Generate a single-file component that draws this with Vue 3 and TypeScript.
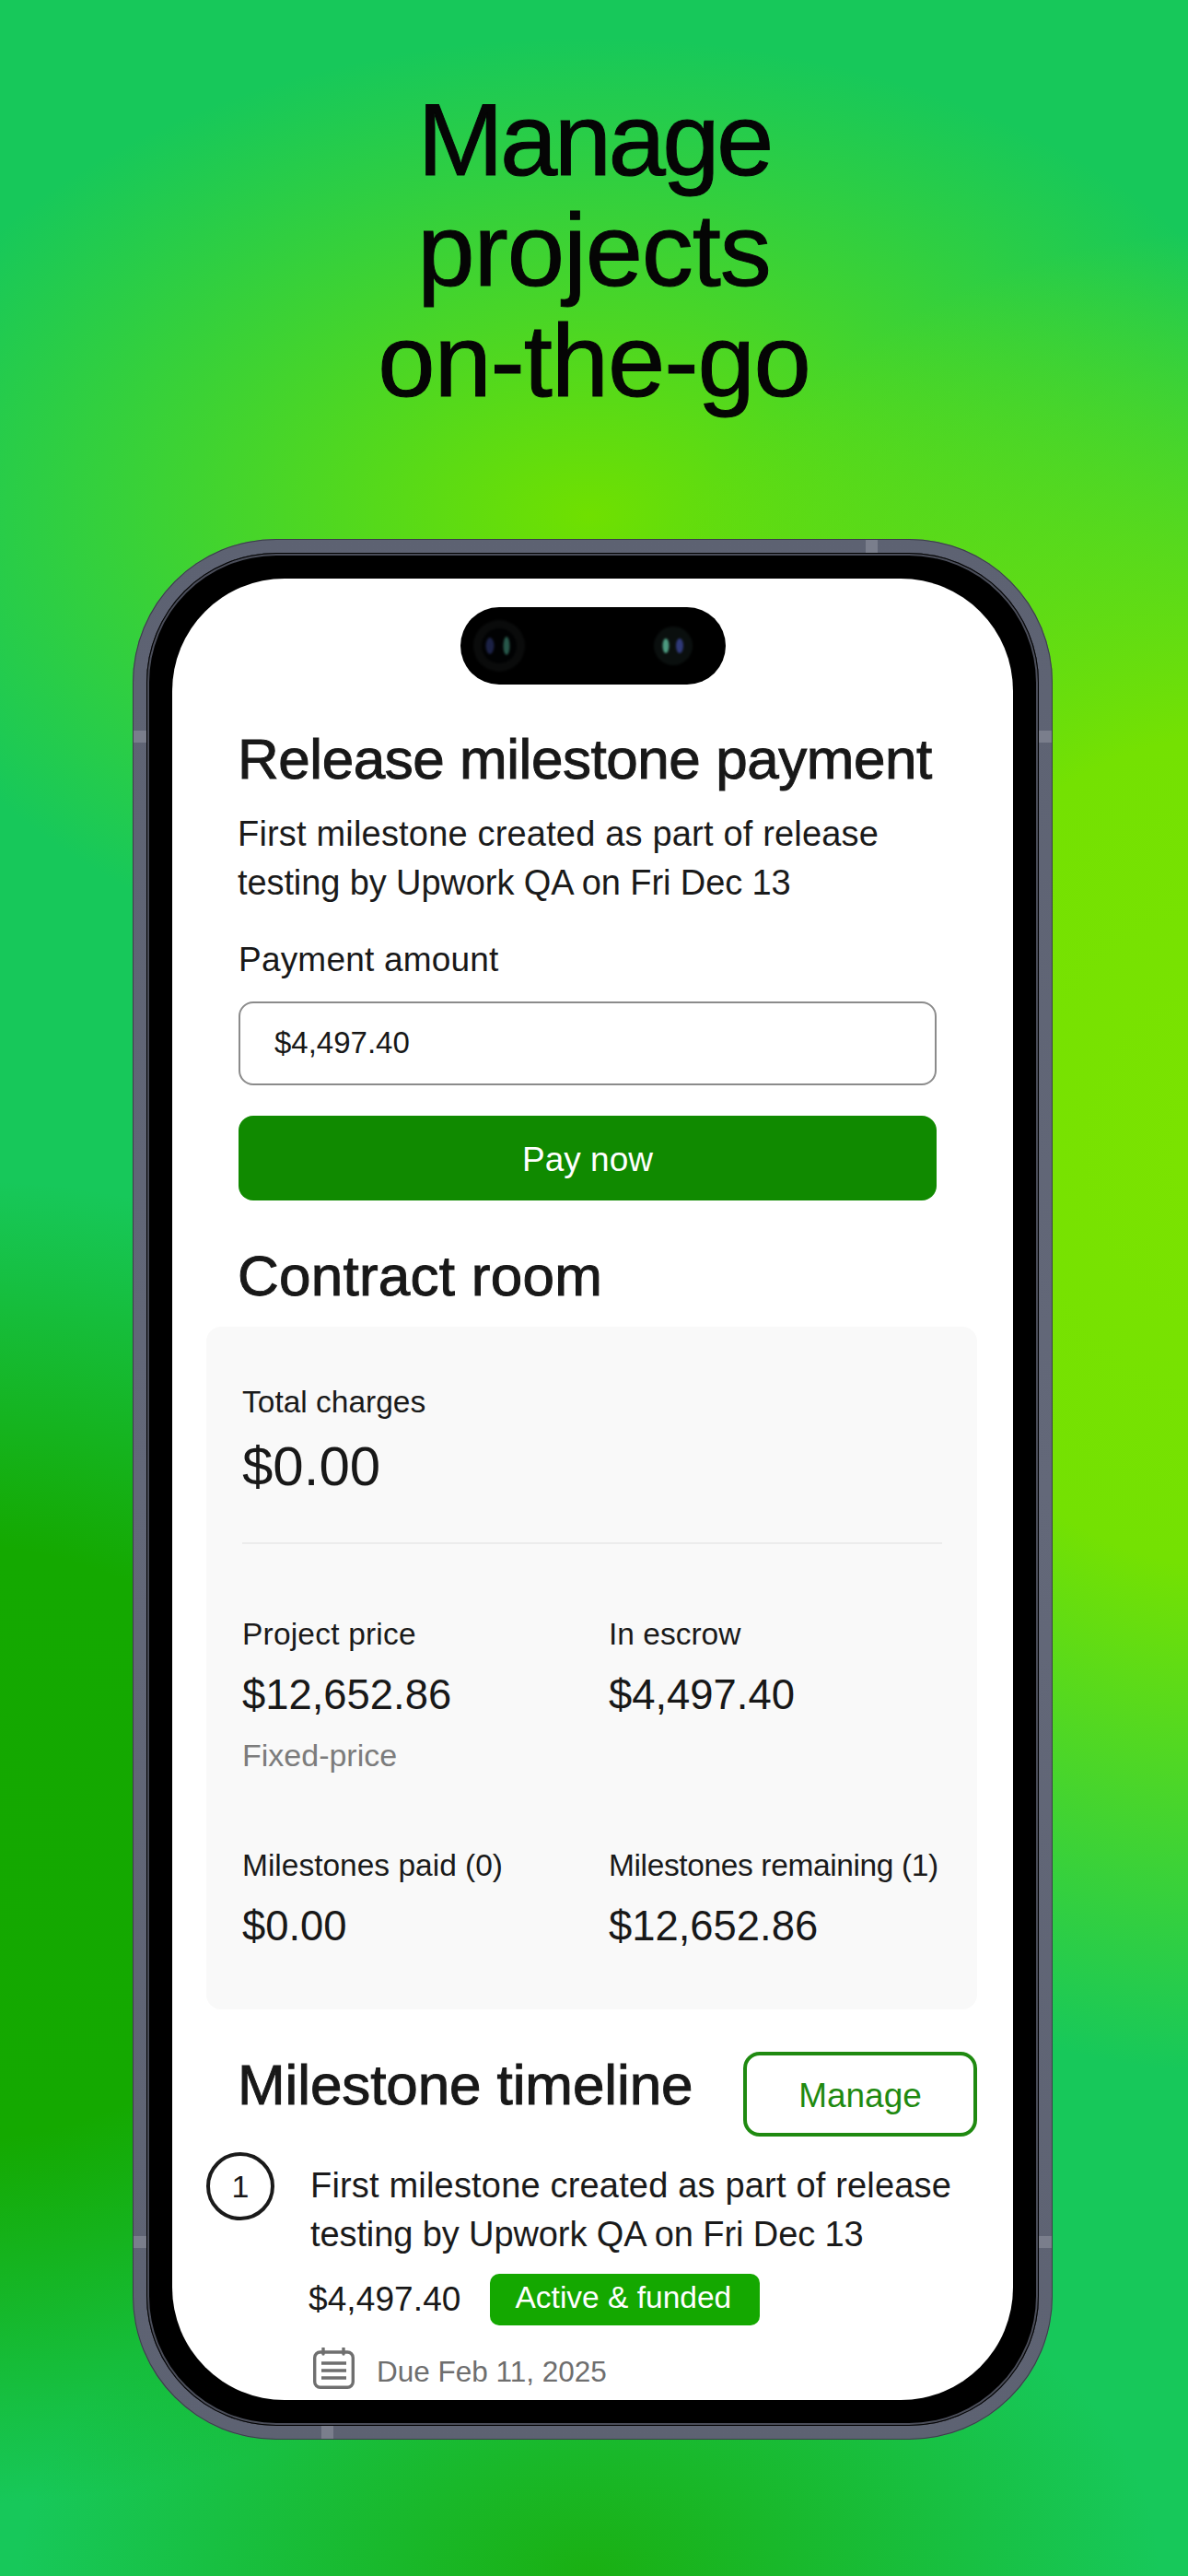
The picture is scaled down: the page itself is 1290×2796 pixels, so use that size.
<template>
  <div class="page">
    <h1 class="headline"><span class="tight">Manage</span><br />projects<br />on-the-go</h1>

    <div class="phone">
      <span v-for="b in bands" :key="b" class="band" :class="b" />
      <div class="bezel">
        <div class="screen">
          <div class="island">
            <svg class="lenses" width="288" height="84" viewBox="0 0 288 84">
              <circle cx="42" cy="42" r="28" fill="#0a0b0b" />
              <circle cx="42" cy="42" r="19" fill="#010203" />
              <ellipse cx="32" cy="42" rx="4.5" ry="9" fill="#1b2145" />
              <ellipse cx="50" cy="42" rx="3.5" ry="10" fill="#27574a" />
              <circle cx="231" cy="42" r="21" fill="#0a0f0e" />
              <ellipse cx="223" cy="42" rx="3.5" ry="8" fill="#4c9a80" />
              <ellipse cx="238" cy="42" rx="4" ry="8" fill="#2f3978" />
            </svg>
          </div>

          <div class="content">
            <section class="release">
              <h2 class="title release-title">Release milestone payment</h2>
              <p class="desc"><span class="line-a">{{ descLine1 }}</span><br /><span class="line-b">{{ descLine2 }}</span></p>
              <div class="form">
                <label class="field-label">Payment amount</label>
                <div class="input">$4,497.40</div>
                <button class="pay">Pay now</button>
              </div>
              <h2 class="title room-title">Contract room</h2>
            </section>

            <section class="card">
              <div class="label">Total charges</div>
              <div class="total">$0.00</div>
              <div class="divider" />
              <div class="stats">
                <div v-for="s in stats" :key="s.label" class="stat">
                  <div class="label">{{ s.label }}</div>
                  <div class="value">{{ s.value }}</div>
                  <div v-if="s.note" class="note">{{ s.note }}</div>
                </div>
              </div>
            </section>

            <section class="timeline">
              <div class="timeline-head">
                <h2 class="title">Milestone timeline</h2>
                <button class="manage">Manage</button>
              </div>
              <div class="milestone">
                <div class="num">1</div>
                <div class="detail">
                  <p class="desc"><span class="line-a">{{ descLine1 }}</span><br /><span class="line-b">{{ descLine2 }}</span></p>
                  <div class="amount-row">
                    <span class="amount">$4,497.40</span>
                    <span class="badge">Active &amp; funded</span>
                  </div>
                  <div class="due">
                    <svg class="cal" viewBox="0 0 45 45" fill="none" stroke="#6f6f6f" stroke-width="3.4" stroke-linecap="round">
                      <rect x="1.7" y="5" width="41.6" height="38.3" rx="6" />
                      <path d="M11 1v6M33 1v6" />
                      <path d="M9 17h27M9 25h27M9 33h27" stroke-width="3.6" stroke-linecap="butt" />
                    </svg>
                    <span class="due-text">Due Feb 11, 2025</span>
                  </div>
                </div>
              </div>
            </section>
          </div>
        </div>
      </div>
    </div>
  </div>
</template>

<script setup lang="ts">
interface Stat {
  label: string
  value: string
  note?: string
}

const descLine1 = 'First milestone created as part of release'
const descLine2 = 'testing by Upwork QA on Fri Dec 13'

const stats: Stat[] = [
  { label: 'Project price', value: '$12,652.86', note: 'Fixed-price' },
  { label: 'In escrow', value: '$4,497.40' },
  { label: 'Milestones paid (0)', value: '$0.00' },
  { label: 'Milestones remaining (1)', value: '$12,652.86' },
]

const bands = ['top', 'bottom', 'left-a', 'left-b', 'right-a', 'right-b']
</script>

<style>
html,
body {
  margin: 0;
  padding: 0;
}
</style>

<style scoped>
.page {
  width: 1290px;
  height: 2796px;
  overflow: hidden;
  box-sizing: border-box;
  padding-top: 92px;
  font-family: "Liberation Sans", Arial, sans-serif;
  color: #181818;
  background:
    radial-gradient(ellipse 820px 1000px at 1330px 1250px, #7be300 0%, #74e102 45%, rgba(116, 225, 2, 0) 100%),
    radial-gradient(ellipse 800px 520px at 640px 560px, #6fe000 0%, rgba(111, 224, 0, 0) 100%),
    radial-gradient(ellipse 900px 720px at -60px 2000px, #14a800 0%, #14a900 45%, rgba(20, 168, 0, 0) 100%),
    radial-gradient(ellipse 620px 400px at 640px 2796px, #1ab012 0%, rgba(26, 176, 18, 0) 100%),
    #17c85a;
}

.headline {
  margin: 0;
  height: 493px;
  font-size: 112px;
  line-height: 120px;
  font-weight: 400;
  letter-spacing: -1.1px;
  text-align: center;
  color: #050505;
  -webkit-text-stroke: 1px #050505;
}

.tight {
  letter-spacing: -3.6px;
}

.phone {
  position: relative;
  width: 999px;
  height: 2063px;
  margin-left: 144px;
  box-sizing: border-box;
  padding: 15px;
  border-radius: 156px;
  background: linear-gradient(180deg, #5d6272, #636879 50%, #5d6272);
  box-shadow: inset 0 0 0 1px #3b3e49;
}

.band {
  position: absolute;
  background: #7a7e8c;
}

.band.top {
  top: 1px;
  left: 796px;
  width: 13px;
  height: 14px;
}

.band.bottom {
  bottom: 1px;
  left: 205px;
  width: 13px;
  height: 14px;
}

.band.left-a,
.band.left-b,
.band.right-a,
.band.right-b {
  width: 14px;
  height: 13px;
}

.band.left-a {
  left: 1px;
  top: 208px;
}

.band.left-b {
  left: 1px;
  top: 1842px;
}

.band.right-a {
  right: 1px;
  top: 208px;
}

.band.right-b {
  right: 1px;
  top: 1842px;
}

.bezel {
  height: 100%;
  box-sizing: border-box;
  padding: 28px;
  border-radius: 141px;
  background: #000;
  box-shadow: inset 0 0 0 1px #000, inset 0 0 0 3px #4a4d59;
}

.screen {
  position: relative;
  height: 100%;
  overflow: hidden;
  border-radius: 122px;
  background: #fff;
}

.island {
  position: absolute;
  top: 31px;
  left: 313px;
  width: 288px;
  height: 84px;
  border-radius: 42px;
  background: #000;
}

.lenses {
  display: block;
  filter: blur(1.2px);
}

.content {
  padding: 160px 39px 0 37px;
}

.title {
  margin: 0;
  font-size: 62px;
  line-height: 72px;
  font-weight: 400;
  letter-spacing: -0.1px;
  color: #181818;
  -webkit-text-stroke: 1px #181818;
}

.release-title {
  letter-spacing: -0.45px;
}

.release {
  margin-left: 34px;
  margin-right: 44px;
}

.desc {
  margin: 19px 0 0;
  font-size: 38px;
  line-height: 53px;
  color: #1a1a1a;
}

.line-a {
  letter-spacing: 0.18px;
}

.line-b {
  letter-spacing: -0.1px;
}

.form {
  margin-left: 1px;
}

.field-label {
  display: block;
  margin-top: 33px;
  font-size: 37px;
  line-height: 48px;
  letter-spacing: 0.2px;
}

.input {
  display: flex;
  align-items: center;
  box-sizing: border-box;
  height: 91px;
  margin-top: 21px;
  padding: 0 0 2px 37px;
  border: 2px solid #8b8b8b;
  border-radius: 16px;
  font-size: 33px;
}

.pay {
  display: block;
  width: 100%;
  height: 92px;
  margin-top: 33px;
  padding-top: 5px;
  border: 0;
  border-radius: 16px;
  background: #108a00;
  color: #fff;
  font: inherit;
  font-size: 37px;
}

.room-title {
  margin-top: 46px;
  letter-spacing: 0.25px;
}

.card {
  margin-top: 19px;
  padding: 60px 38px 60px 39px;
  border-radius: 16px;
  background: #f9f9f9;
}

.label {
  font-size: 33.5px;
  line-height: 44px;
  color: #1a1a1a;
}

.stat:nth-child(1) .label {
  letter-spacing: 0.2px;
}

.stat:nth-child(4) .label {
  letter-spacing: -0.37px;
}

.total {
  margin-top: 13px;
  font-size: 60px;
  line-height: 70px;
}

.divider {
  height: 2px;
  margin-top: 47px;
  background: #ececec;
}

.stats {
  display: grid;
  grid-template-columns: 398px 1fr;
}

.stat {
  margin-top: 76px;
  white-space: nowrap;
}

.value {
  margin-top: 14px;
  font-size: 45.4px;
  line-height: 60px;
}

.note {
  margin-top: 13px;
  font-size: 34px;
  line-height: 44px;
  color: #7c7c7c;
}

.timeline {
  margin-top: 46px;
}

.timeline-head {
  display: flex;
  justify-content: space-between;
  align-items: flex-start;
  padding-left: 34px;
}

.manage {
  width: 254px;
  height: 92px;
  box-sizing: border-box;
  padding-top: 5px;
  border: 4px solid #1f8a10;
  border-radius: 18px;
  background: #fff;
  color: #1f8a10;
  font: inherit;
  font-size: 37px;
}

.milestone {
  display: flex;
  gap: 39px;
  margin-top: 17px;
}

.num {
  flex: none;
  display: flex;
  align-items: center;
  justify-content: center;
  box-sizing: border-box;
  width: 74px;
  height: 74px;
  border: 4px solid #1a1a1a;
  border-radius: 50%;
  font-size: 34px;
}

.detail {
  flex: 1;
  padding-top: 10px;
}

.detail .desc {
  margin: 0;
}

.amount-row {
  display: flex;
  align-items: center;
  gap: 31px;
  margin-top: 16px;
  margin-left: -2px;
}

.amount {
  font-size: 37px;
  letter-spacing: 0.1px;
}

.badge {
  display: flex;
  align-items: center;
  box-sizing: border-box;
  width: 293px;
  height: 56px;
  padding: 0 0 4px 28px;
  border-radius: 10px;
  background: #14a800;
  color: #fff;
  font-size: 33.5px;
}

.due {
  display: flex;
  align-items: center;
  gap: 24px;
  margin-top: 24px;
  margin-left: 3px;
  font-size: 31.5px;
  color: #6e6e6e;
}

.due-text {
  padding-top: 7px;
}

.cal {
  flex: none;
  width: 45px;
  height: 45px;
}
</style>
